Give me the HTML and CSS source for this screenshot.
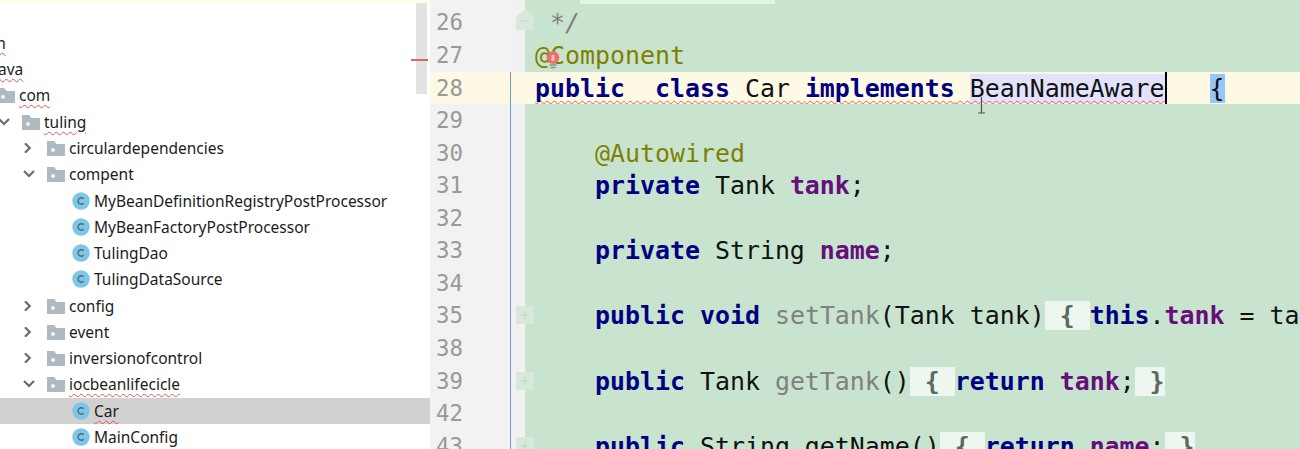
FILE: index.html
```html
<!DOCTYPE html>
<html lang="en">
<head>
<meta charset="utf-8">
<title>Car.java</title>
<link rel="stylesheet" href="styles.css">
</head>
<body>
<svg class="defs" width="0" height="0" aria-hidden="true">
  <symbol id="folder" viewBox="0 0 18 16"><path d="M0 1h7l2.500 3H18v12H0z" fill="#aeb9c0"/><circle cx="6" cy="10" r="2" fill="#f4f6f7"/></symbol>
  <symbol id="cls" viewBox="0 0 18 18"><circle cx="9" cy="9" r="8.700" fill="#7cc6ea"/><path d="M11.600 6.800a3.200 3.200 0 1 0 0 4.400" fill="none" stroke="#5a6870" stroke-width="1.500"/></symbol>
  <symbol id="open" viewBox="0 0 14 10"><path d="M3 2l5 5 5-5" fill="none" stroke="#6b6b6b" stroke-width="2.200"/></symbol>
  <symbol id="shut" viewBox="0 0 14 10"><path d="M4 .3l4.700 4.700-4.700 4.700" fill="none" stroke="#6b6b6b" stroke-width="2.200"/></symbol>
  <symbol id="plus" viewBox="0 0 18 18"><rect x=".5" y=".5" width="17" height="17" fill="#d6e9da" stroke="#dbe6dd"/><path d="M5 9h8M9 5v8" stroke="#c0d3c5"/></symbol>
</svg>
<main class="window">
  <aside class="sidebar">
    <div class="tree">
      <div class="node l0"><span class="chev"></span><span class="ico"></span><span class="squig">main</span></div>
      <div class="node l1"><span class="chev"></span><span class="ico"></span><span class="squig">java</span></div>
      <div class="node l2"><span class="chev"></span><svg class="ico"><use href="#folder"/></svg><span class="squig">com</span></div>
      <div class="node l3"><svg class="chev"><use href="#open"/></svg><svg class="ico"><use href="#folder"/></svg><span class="squig">tuling</span></div>
      <div class="node l4"><svg class="chev"><use href="#shut"/></svg><svg class="ico"><use href="#folder"/></svg><span>circulardependencies</span></div>
      <div class="node l4"><svg class="chev"><use href="#open"/></svg><svg class="ico"><use href="#folder"/></svg><span>compent</span></div>
      <div class="node l5"><span class="chev"></span><svg class="ico round"><use href="#cls"/></svg><span>MyBeanDefinitionRegistryPostProcessor</span></div>
      <div class="node l5"><span class="chev"></span><svg class="ico round"><use href="#cls"/></svg><span>MyBeanFactoryPostProcessor</span></div>
      <div class="node l5"><span class="chev"></span><svg class="ico round"><use href="#cls"/></svg><span>TulingDao</span></div>
      <div class="node l5"><span class="chev"></span><svg class="ico round"><use href="#cls"/></svg><span>TulingDataSource</span></div>
      <div class="node l4"><svg class="chev"><use href="#shut"/></svg><svg class="ico"><use href="#folder"/></svg><span>config</span></div>
      <div class="node l4"><svg class="chev"><use href="#shut"/></svg><svg class="ico"><use href="#folder"/></svg><span>event</span></div>
      <div class="node l4"><svg class="chev"><use href="#shut"/></svg><svg class="ico"><use href="#folder"/></svg><span>inversionofcontrol</span></div>
      <div class="node l4"><svg class="chev"><use href="#open"/></svg><svg class="ico"><use href="#folder"/></svg><span class="squig">iocbeanlifecicle</span></div>
      <div class="node l5 selected"><span class="chev"></span><svg class="ico round"><use href="#cls"/></svg><span class="squig">Car</span></div>
      <div class="node l5"><span class="chev"></span><svg class="ico round"><use href="#cls"/></svg><span>MainConfig</span></div>
    </div>
    <div class="scrollthumb"></div>
    <div class="errormark"></div>
  </aside>
  <section class="editor">
    <div class="line stub"><span class="num"></span><span class="bar nobar"></span><span class="code"><span class="stubmark"></span></span></div>
    <div class="line"><span class="num">26</span><span class="bar nobar"></span><span class="code"> <i class="cm">*/</i></span>
      <svg class="foldend" width="18" height="21" viewBox="0 0 18 21"><path d="M.5 7.500L9 .8l8.500 6.700v13H.5z" fill="#d6e9da" stroke="#dbe6dd"/><path d="M5 12h8" stroke="#c0d3c5"/></svg></div>
    <div class="line"><span class="num">27</span><span class="bar nobar"></span><span class="code"><span class="ann">@Component</span></span>
      <svg class="bulb" width="14" height="19" viewBox="0 0 14 19"><circle cx="7" cy="6.500" r="6.300" fill="#ee6c6c"/><path d="M5.500 4h3v6h-3z" fill="#f7c9b0"/><path d="M3.500 14h7M4.500 16.500h5" stroke="#7f9a86" stroke-width="1.500"/></svg></div>
    <div class="line current"><span class="num">28</span><span class="bar"></span><span class="code"><span class="wave"><b class="kw">public</b>  <b class="kw">class</b> Car <b class="kw">implements</b> <span class="ident">BeanNameAware</span></span><span class="caret"></span>   <span class="match">{</span></span>
      <svg class="ibeam" width="9" height="17" viewBox="0 0 9 17"><path d="M4.500 0v16M1 16h7" stroke="#3d5a48" stroke-width="1.200" fill="none"/></svg></div>
    <div class="line"><span class="num">29</span><span class="bar"></span><span class="code"></span></div>
    <div class="line"><span class="num">30</span><span class="bar"></span><span class="code">    <span class="ann">@Autowired</span></span></div>
    <div class="line"><span class="num">31</span><span class="bar"></span><span class="code">    <b class="kw">private</b> Tank <b class="fld">tank</b>;</span></div>
    <div class="line"><span class="num">32</span><span class="bar"></span><span class="code"></span></div>
    <div class="line"><span class="num">33</span><span class="bar"></span><span class="code">    <b class="kw">private</b> String <b class="fld">name</b>;</span></div>
    <div class="line"><span class="num">34</span><span class="bar"></span><span class="code"></span></div>
    <div class="line"><span class="num">35</span><span class="bar"></span><span class="code">    <b class="kw">public</b> <b class="kw">void</b> <span class="unused">setTank</span>(Tank tank)<span class="fold"> { </span><b class="kw">this</b>.<b class="fld">tank</b> = tank; }</span>
      <svg class="foldmark"><use href="#plus"/></svg></div>
    <div class="line"><span class="num">38</span><span class="bar"></span><span class="code"></span><span class="guide"></span></div>
    <div class="line"><span class="num">39</span><span class="bar"></span><span class="code">    <b class="kw">public</b> Tank <span class="unused">getTank</span>()<span class="fold"> { </span><b class="kw">return</b> <b class="fld">tank</b>;<span class="fold"> }</span></span>
      <svg class="foldmark"><use href="#plus"/></svg></div>
    <div class="line"><span class="num">42</span><span class="bar"></span><span class="code"></span></div>
    <div class="line"><span class="num">43</span><span class="bar"></span><span class="code">    <b class="kw">public</b> String getName()<span class="fold"> { </span><b class="kw">return</b> <b class="fld">name</b>;<span class="fold"> }</span></span>
      <svg class="foldmark"><use href="#plus"/></svg></div>
  </section>
</main>
</body>
</html>
```
FILE: styles.css
```css
html, body {
  margin: 0;
  padding: 0;
  height: 449px;
  overflow: hidden;
  background: #fff;
}

.defs {
  position: absolute;
}

.window {
  display: flex;
  height: 449px;
  overflow: hidden;
}

/* project tree */
.sidebar {
  position: relative;
  flex: 0 0 430px;
  height: 449px;
  overflow: hidden;
  background: #fff;
  border-top: 3px solid #fffdeb;
  box-sizing: border-box;
}

.tree {
  padding-top: 26.8px;
  font-family: "Noto Sans", sans-serif;
  font-size: 15.5px;
  color: #1c1c1c;
}

.node {
  display: flex;
  align-items: center;
  height: 26.27px;
  white-space: nowrap;
}

.l0 { margin-left: -79px; }
.l1 { margin-left: -54px; }
.l2 { margin-left: -29px; }
.l3 { margin-left: -4px; }
.l4 { margin-left: 21px; }
.l5 { margin-left: 46px; }

.node.selected {
  margin-left: 0;
  padding-left: 46px;
  background: #d1d1d1;
}

.chev {
  flex: 0 0 14px;
  width: 14px;
  height: 10px;
  margin-right: 12px;
}

.ico {
  flex: 0 0 18px;
  width: 18px;
  height: 16px;
  margin-right: 4px;
}

.ico.round {
  height: 18px;
}

.squig {
  text-decoration: underline wavy #e2574f 1.4px;
  text-underline-offset: 3px;
}

.scrollthumb {
  position: absolute;
  top: -3px;
  left: 416px;
  width: 11px;
  height: 94px;
  background: #e2e2e2;
}

.errormark {
  position: absolute;
  top: 56px;
  left: 411px;
  width: 17px;
  height: 2px;
  background: #cf6a66;
}

/* editor */
.editor {
  flex: 1;
  min-width: 0;
  height: 449px;
  overflow: hidden;
  background: #c8e4cf;
}

.line {
  position: relative;
  display: flex;
  height: 32.57px;
  line-height: 32.57px;
  font-family: "DejaVu Sans Mono", monospace;
  font-size: 24.9px;
  color: #111;
  white-space: pre;
}

.line.stub {
  height: 6.4px;
  line-height: 6.4px;
}

.num {
  flex: 0 0 80px;
  box-sizing: border-box;
  padding-left: 6px;
  background: #f2f2f2;
  color: #999;
  font-size: 22.4px;
}

.bar {
  flex: 0 0 14.6px;
  box-sizing: border-box;
  border-left: 1px solid #6d9bc9;
  background: #f1f1f1;
}

.bar.nobar {
  border-left: 0;
}

.code {
  flex: 1;
  min-width: 0;
  padding-left: 10.5px;
  line-height: 33.6px;
  overflow: hidden;
}

.current .num,
.current .bar,
.current .code {
  background: #fef9e4;
}

.stubmark {
  display: block;
  width: 195px;
  height: 4px;
  margin-left: 45px;
  background: #e0f7e0;
}

.kw { color: #000080; font-weight: 700; }
.fld { color: #660e7a; font-weight: 700; }
.ann { color: #808000; }
.cm { color: #808080; font-style: italic; }
.unused { color: #808080; }

.fold {
  background: #eef7ef;
  color: #5b6a60;
  font-weight: 700;
}

.wave {
  text-decoration: underline wavy #ea5a5a 1.4px;
  text-underline-offset: 3px;
  text-decoration-skip-ink: none;
}

.ident { background: #e2e3fb; }
.match { background: #96c6f8; }

.caret {
  display: inline-block;
  width: 2px;
  height: 32px;
  margin-right: -2px;
  vertical-align: top;
  background: #000;
}

.foldmark,
.foldend,
.bulb,
.ibeam,
.guide {
  position: absolute;
}

.foldmark {
  left: 86px;
  top: 7px;
  width: 18px;
  height: 18px;
}

.foldend {
  left: 86px;
  top: 3px;
}

.bulb {
  left: 116px;
  top: 12px;
}

.ibeam {
  left: 547px;
  top: 25px;
}

.guide {
  left: 100px;
  top: -2px;
  width: 1px;
  height: 33px;
  background: #d2e6d6;
}
```
